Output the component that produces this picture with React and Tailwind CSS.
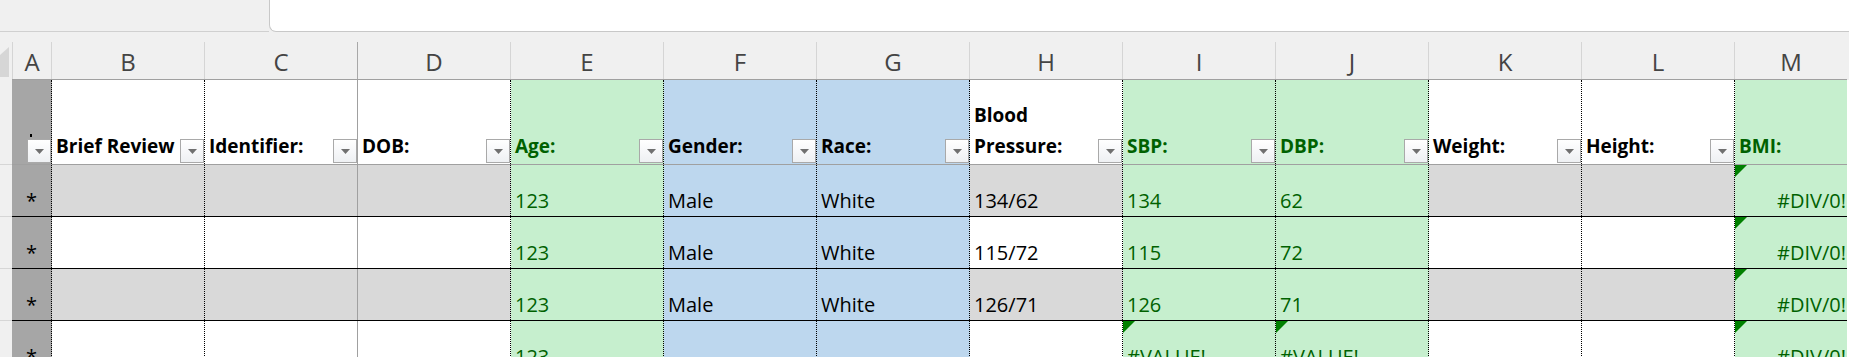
import React from "react";

const FONT = { fontFamily: '"Open Sans", "Liberation Sans", sans-serif' };

const cols = [
  { k: "A", w: "w-[40px]", hdr: "", type: "a", hb: "border-l border-r border-[#d5d5d5]" },
  { k: "B", w: "w-[153px]", hdr: "Brief Review", type: "plain" },
  { k: "C", w: "w-[153px]", hdr: "Identifier:", type: "plain", freeze: true },
  { k: "D", w: "w-[153px]", hdr: "DOB:", type: "plain" },
  { k: "E", w: "w-[153px]", hdr: "Age:", type: "green" },
  { k: "F", w: "w-[153px]", hdr: "Gender:", type: "blue" },
  { k: "G", w: "w-[153px]", hdr: "Race:", type: "blue" },
  { k: "H", w: "w-[153px]", hdr: ["Blood", "Pressure:"], type: "plain" },
  { k: "I", w: "w-[153px]", hdr: "SBP:", type: "green" },
  { k: "J", w: "w-[153px]", hdr: "DBP:", type: "green" },
  { k: "K", w: "w-[153px]", hdr: "Weight:", type: "plain" },
  { k: "L", w: "w-[153px]", hdr: "Height:", type: "plain" },
  { k: "M", w: "w-[112px]", hdr: "BMI:", type: "green", last: true },
];

const rows = [
  { E: "123", F: "Male", G: "White", H: "134/62", I: "134", J: "62", M: "#DIV/0!", tri: ["M"] },
  { E: "123", F: "Male", G: "White", H: "115/72", I: "115", J: "72", M: "#DIV/0!", tri: ["M"] },
  { E: "123", F: "Male", G: "White", H: "126/71", I: "126", J: "71", M: "#DIV/0!", tri: ["M"] },
  { E: "123", I: "#VALUE!", J: "#VALUE!", M: "#DIV/0!", tri: ["I", "J", "M"] },
];

function bodyBorder(c) {
  if (c.last) return "";
  if (c.freeze) return "border-r border-solid border-[#a0a0a0]";
  return "border-r border-dotted border-black";
}

function bgFor(c, rowIdx) {
  if (c.type === "a") return "bg-[#a6a6a6]";
  if (c.type === "green") return "bg-[#c6efce]";
  if (c.type === "blue") return "bg-[#bdd7ee]";
  if (rowIdx === -1) return "bg-white";
  return rowIdx % 2 === 0 ? "bg-[#d9d9d9]" : "bg-white";
}

function Dropdown() {
  return (
    <div className="w-[24px] h-[24px] mb-[1px] shrink-0 border border-[#a9a9a9] bg-linear-to-b from-white to-[#eef0f3] flex items-center justify-center">
      <svg width="9" height="5" viewBox="0 0 9 5">
        <path d="M0 0H9L4.5 5Z" fill="#707070" />
      </svg>
    </div>
  );
}

function Triangle() {
  return (
    <svg className="absolute left-0 top-0" width="12" height="12" viewBox="0 0 12 12">
      <path d="M0 0H12L0 12Z" fill="#008000" />
    </svg>
  );
}

export default function App() {
  return (
    <div className="w-[1849px] h-[357px] overflow-hidden bg-[#f0f0f0] text-black" style={FONT}>
      {/* formula bar strip */}
      <div className="h-[32px] flex">
        <div className="w-[269px] shrink-0 border-b border-[#d0d0d0]" />
        <div className="flex-1 bg-white border-l border-b border-[#c8c8c8] rounded-bl-[7px]" />
      </div>
      <div className="h-[10px]" />

      {/* column letters */}
      <div className="h-[38px] flex">
        <div className="w-[12px] shrink-0 relative">
          <svg className="absolute left-0 top-[5px]" width="9" height="30" viewBox="0 0 9 30">
            <path d="M9 0V30H0V8Z" fill="#d6d6d6" />
          </svg>
        </div>
        <div className="flex border-b border-[#a0a0a0]">
          {cols.map((c) => (
            <div
              key={c.k}
              className={`${c.w} h-full flex items-center justify-center pt-[3px] text-[24px] leading-none text-[#444444] ${
                c.hb ? c.hb : c.last ? "" : c.freeze ? "border-r border-[#a8a8a8]" : "border-r border-[#d5d5d5]"
              }`}
            >
              {c.k}
            </div>
          ))}
        </div>
        <div className="flex-1" />
      </div>

      {/* header data row */}
      <div className="h-[85px] flex">
        <div className="w-[12px] shrink-0 border-b border-[#d6d6d6]" />
        <div className="flex border-b border-[#a0a0a0]">
          {cols.map((c) => {
            const color = c.type === "green" ? "text-[#006100]" : "text-black";
            return (
              <div
                key={c.k}
                className={`${c.w} h-full relative flex items-end justify-between pl-[4px] ${bgFor(c, -1)} ${bodyBorder(c)}`}
              >
                {c.type === "a" ? (
                  <div className="absolute left-[18px] top-[54px] w-[2px] h-[3px] bg-black" />
                ) : null}
                <div className={`pb-[2px] text-[19px] leading-[31px] font-bold whitespace-nowrap ${color}`}>
                  {Array.isArray(c.hdr) ? (
                    <>
                      <div>{c.hdr[0]}</div>
                      <div>{c.hdr[1]}</div>
                    </>
                  ) : (
                    c.hdr
                  )}
                </div>
                {c.last ? null : <Dropdown />}
              </div>
            );
          })}
        </div>
        <div className="flex-1 bg-white" />
      </div>

      {/* data rows */}
      {rows.map((r, ri) => (
        <div key={ri} className="h-[52px] flex">
          <div className="w-[12px] shrink-0 border-b border-[#d6d6d6]" />
          <div className="flex border-b border-black">
            {cols.map((c) => {
              const color = c.type === "green" ? "text-[#006100]" : "text-black";
              if (c.type === "a") {
                return (
                  <div
                    key={c.k}
                    className={`${c.w} h-full flex items-end justify-center pb-[2px] text-[20px] leading-[27px] ${bgFor(c, ri)} ${bodyBorder(c)}`}
                  >
                    *
                  </div>
                );
              }
              const text = r[c.k] || "";
              return (
                <div
                  key={c.k}
                  className={`${c.w} h-full relative flex items-end ${
                    c.last ? "justify-end pr-[1px]" : "justify-start pl-[4px]"
                  } pb-[2px] text-[20px] leading-[27px] whitespace-nowrap ${color} ${bgFor(c, ri)} ${bodyBorder(c)}`}
                >
                  {r.tri.includes(c.k) ? <Triangle /> : null}
                  {text}
                </div>
              );
            })}
          </div>
          <div className="flex-1 bg-white" />
        </div>
      ))}
    </div>
  );
}
